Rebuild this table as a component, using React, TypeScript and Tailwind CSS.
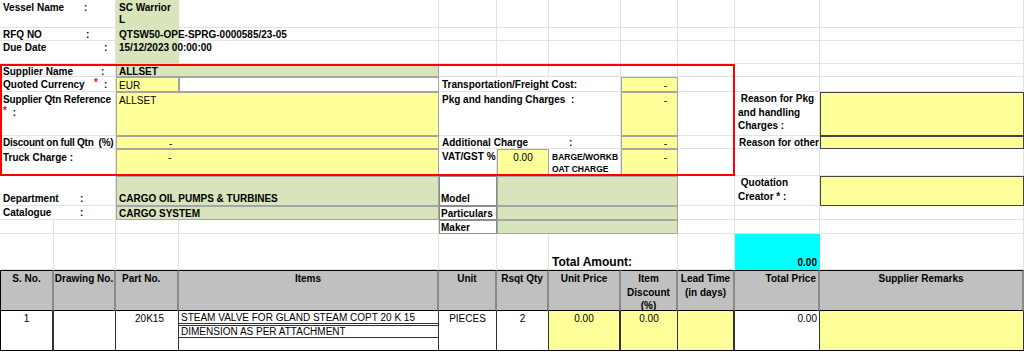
import React from "react";

// sheet column widths and row heights (px)
const cols =
  "grid-cols-[54px_62px_63px_260px_58px_52px_72px_57px_57px_85px_204px]";
const rows =
  "grid-rows-[28px_13px_23px_13px_15px_44px_13px_27px_30px_14px_14px_36px_41px_40px]";

const label = "bg-white border-r border-b border-[#e2e2e2] font-bold pl-[3px]";
const green = "bg-[#d8e4bc] border border-[#a5a5a5]";
const yellow = "bg-[#ffff99] border border-[#a5a5a5]";
const reason = "bg-[#ffff99] border border-[#444]";
const boxed = "bg-white border border-[#8c8c8c] font-bold pl-[1px]";
const head =
  "bg-[#c0c0c0] border-t border-b border-t-black border-b-black border-r-2 border-r-[#8a8a8a] font-bold text-center pt-[1px] leading-[13.5px]";
const data = "border-b border-r border-b-black border-r-[#333] pt-[1px] text-center";

function GridLines() {
  return (
    <div className={`col-start-1 row-start-1 grid ${cols} ${rows}`}>
      {Array.from({ length: 154 }).map((_, i) => (
        <div key={i} className="border-r border-b border-[#e2e2e2]" />
      ))}
    </div>
  );
}

export default function App() {
  return (
    <div className="grid w-[1024px] h-[352px] overflow-hidden bg-white text-black font-['Liberation_Sans',Arial,sans-serif] text-[10px] leading-[13px]">
      <GridLines />

      <div className={`col-start-1 row-start-1 grid ${cols} ${rows}`}>
        {/* vessel header */}
        <div className={`col-start-1 col-span-2 row-start-1 ${label} pt-[1px]`}>
          <span className="inline-block w-[81px]">Vessel Name</span>:
        </div>
        <div className="col-start-3 row-start-1 bg-[#d8e4bc] pl-[3px] pt-[2px] font-bold leading-[12px]">
          SC Warrior
          <br />L
        </div>
        <div className={`col-start-1 col-span-2 row-start-2 ${label}`}>
          <span className="inline-block w-[83px]">RFQ NO</span>:
        </div>
        <div className="col-start-3 row-start-2 bg-[#d8e4bc] pl-[3px] font-bold whitespace-nowrap">
          QTSW50-OPE-SPRG-0000585/23-05
        </div>
        <div className={`col-start-1 col-span-2 row-start-3 ${label}`}>
          <span className="inline-block w-[101px]">Due Date</span>:
        </div>
        <div className="col-start-3 row-start-3 bg-[#d8e4bc] pl-[3px] font-bold whitespace-nowrap">
          15/12/2023 00:00:00
        </div>

        {/* supplier block */}
        <div className={`col-start-1 col-span-2 row-start-4 ${label} pt-[1px]`}>
          <span className="inline-block w-[98px]">Supplier Name</span>:
        </div>
        <div className={`col-start-3 col-span-2 row-start-4 ${green} pl-[2px] font-bold`}>
          ALLSET
        </div>

        <div className={`col-start-1 col-span-2 row-start-5 ${label} pt-[1px]`}>
          <span className="inline-block w-[91px]">Quoted Currency</span>
          <span className="text-[#ff0000] relative top-[-2px]">*</span>
          <span className="ml-[6px]">:</span>
        </div>
        <div className={`col-start-3 row-start-5 ${yellow} pl-[2px] pt-[1px]`}>EUR</div>
        <div className="col-start-4 row-start-5 bg-white border border-[#a5a5a5]" />
        <div className={`col-start-5 col-span-3 row-start-5 ${label} pl-[2px] pt-[1px]`}>
          Transportation/Freight Cost:
        </div>
        <div className={`col-start-8 row-start-5 ${yellow} text-right pr-[10px] pt-[1px]`}>-</div>

        <div className={`col-start-1 col-span-2 row-start-6 ${label} pt-[1px] whitespace-nowrap tracking-[-0.15px]`}>
          Supplier Qtn Reference
          <br />
          <span className="text-[#ff0000] relative top-[-2px]">*</span>
          <span className="ml-[6px]">:</span>
        </div>
        <div className={`col-start-3 col-span-2 row-start-6 ${yellow} pl-[2px] pt-[1px]`}>ALLSET</div>
        <div className={`col-start-5 col-span-3 row-start-6 ${label} pl-[2px] pt-[1px]`}>
          Pkg and handing Charges&nbsp;&nbsp;:
        </div>
        <div className={`col-start-8 row-start-6 ${yellow} text-right pr-[10px] pt-[1px]`}>-</div>
        <div className={`col-start-10 row-start-6 ${label} pl-[2px] leading-[13.5px]`}>
          &nbsp;Reason for Pkg
          <br />
          and handling
          <br />
          Charges :
        </div>
        <div className={`col-start-11 row-start-6 ${reason}`} />

        <div className={`col-start-1 col-span-2 row-start-7 ${label} whitespace-nowrap tracking-[-0.25px]`}>
          Discount on full Qtn&nbsp;&nbsp;(%)
        </div>
        <div className={`col-start-3 col-span-2 row-start-7 ${yellow} pl-[52px]`}>-</div>
        <div className={`col-start-5 col-span-3 row-start-7 ${label} pl-[2px]`}>
          <span className="inline-block w-[127px]">Additional Charge</span>:
        </div>
        <div className={`col-start-8 row-start-7 ${yellow} text-right pr-[10px]`}>-</div>
        <div className={`col-start-10 row-start-7 ${label} pl-[4px]`}>Reason for other</div>
        <div className={`col-start-11 row-start-7 ${reason}`} />

        <div className={`col-start-1 col-span-2 row-start-8 ${label} pt-[2px]`}>Truck Charge :</div>
        <div className={`col-start-3 col-span-2 row-start-8 ${yellow} pl-[51px] pt-[1px]`}>-</div>
        <div className={`col-start-5 row-start-8 ${label} pl-[2px] pt-[1px]`}>VAT/GST %</div>
        <div className={`col-start-6 row-start-8 ${yellow} text-center pt-[1px]`}>0.00</div>
        <div className={`col-start-7 row-start-8 ${label} pl-[1px] pt-[2px] text-[8.5px] leading-[12px]`}>
          BARGE/WORKB
          <br />
          OAT CHARGE
        </div>
        <div className={`col-start-8 row-start-8 ${yellow} text-right pr-[10px] pt-[1px]`}>-</div>

        {/* department block */}
        <div className={`col-start-1 col-span-2 row-start-9 ${label} flex items-end`}>
          <span className="inline-block w-[77px]">Department</span>:
        </div>
        <div className={`col-start-3 col-span-2 row-start-9 ${green} pl-[2px] font-bold flex items-end`}>
          CARGO OIL PUMPS &amp; TURBINES
        </div>
        <div className={`col-start-5 row-start-9 ${boxed} flex items-end`}>Model</div>
        <div className={`col-start-6 col-span-3 row-start-9 ${green}`} />
        <div className={`col-start-10 row-start-9 ${label} pl-[3px] leading-[14px]`}>
          &nbsp;Quotation
          <br />
          Creator * :
        </div>
        <div className={`col-start-11 row-start-9 ${reason}`} />

        <div className={`col-start-1 col-span-2 row-start-10 ${label}`}>
          <span className="inline-block w-[77px]">Catalogue</span>:
        </div>
        <div className={`col-start-3 col-span-2 row-start-10 ${green} pl-[2px] font-bold`}>CARGO SYSTEM</div>
        <div className={`col-start-5 row-start-10 ${boxed}`}>Particulars</div>
        <div className={`col-start-6 col-span-3 row-start-10 ${green}`} />

        <div className={`col-start-5 row-start-11 ${boxed}`}>Maker</div>
        <div className={`col-start-6 col-span-3 row-start-11 ${green}`} />

        {/* total */}
        <div className={`col-start-7 col-span-2 row-start-12 ${label} text-[12px] leading-[14px] flex items-end whitespace-nowrap`}>
          Total Amount:
        </div>
        <div className="col-start-10 row-start-12 bg-[#00ffff] font-bold flex items-end justify-end pr-[3px] leading-[12px] pb-[1px]">
          0.00
        </div>

        {/* item table header */}
        <div className={`col-start-1 row-start-13 ${head} border-l border-l-black`}>S. No.</div>
        <div className={`col-start-2 row-start-13 ${head}`}>Drawing No.</div>
        <div className={`col-start-3 row-start-13 ${head} text-left pl-[6px]`}>Part No.</div>
        <div className={`col-start-4 row-start-13 ${head}`}>Items</div>
        <div className={`col-start-5 row-start-13 ${head}`}>Unit</div>
        <div className={`col-start-6 row-start-13 ${head}`}>Rsqt Qty</div>
        <div className={`col-start-7 row-start-13 ${head}`}>Unit Price</div>
        <div className={`col-start-8 row-start-13 ${head}`}>
          Item
          <br />
          Discount
          <br />
          (%)
        </div>
        <div className={`col-start-9 row-start-13 ${head}`}>
          Lead Time
          <br />
          (in days)
        </div>
        <div className={`col-start-10 row-start-13 ${head} text-right pr-[2px]`}>Total Price</div>
        <div className={`col-start-11 row-start-13 ${head}`}>Supplier Remarks</div>

        {/* item row */}
        <div className={`col-start-1 row-start-14 ${data} bg-white border-l border-l-black border-r-2 border-r-[#8a8a8a]`}>1</div>
        <div className={`col-start-2 row-start-14 ${data} bg-white`} />
        <div className={`col-start-3 row-start-14 ${data} bg-white pl-[5px]`}>20K15</div>
        <div className="col-start-4 row-start-14 bg-white border-b border-r border-b-black border-r-[#333] flex flex-col whitespace-nowrap">
          <div className="h-[13px] border-b border-[#333] pl-[2px] leading-[13px]">
            STEAM VALVE FOR GLAND STEAM COPT 20 K 15
          </div>
          <div className="h-[13px] mt-[1px] border-t border-b border-[#333] pl-[2px] leading-[12px]">
            DIMENSION AS PER ATTACHMENT
          </div>
        </div>
        <div className={`col-start-5 row-start-14 ${data} bg-white`}>PIECES</div>
        <div className={`col-start-6 row-start-14 ${data} bg-white`}>2</div>
        <div className={`col-start-7 row-start-14 ${data} bg-[#ffff99] border-r-2 border-r-[#8a8a8a]`}>0.00</div>
        <div className={`col-start-8 row-start-14 ${data} bg-[#ffff99]`}>0.00</div>
        <div className={`col-start-9 row-start-14 ${data} bg-[#ffff99] border-r-2 border-r-[#8a8a8a]`} />
        <div className={`col-start-10 row-start-14 ${data} bg-white text-right pr-[2px]`}>0.00</div>
        <div className={`col-start-11 row-start-14 ${data} bg-[#ffff99]`} />

        {/* required-fields frame */}
        <div className="col-start-1 col-span-9 row-start-4 row-span-5 border-2 border-[#ff0000] pointer-events-none" />
      </div>
    </div>
  );
}
